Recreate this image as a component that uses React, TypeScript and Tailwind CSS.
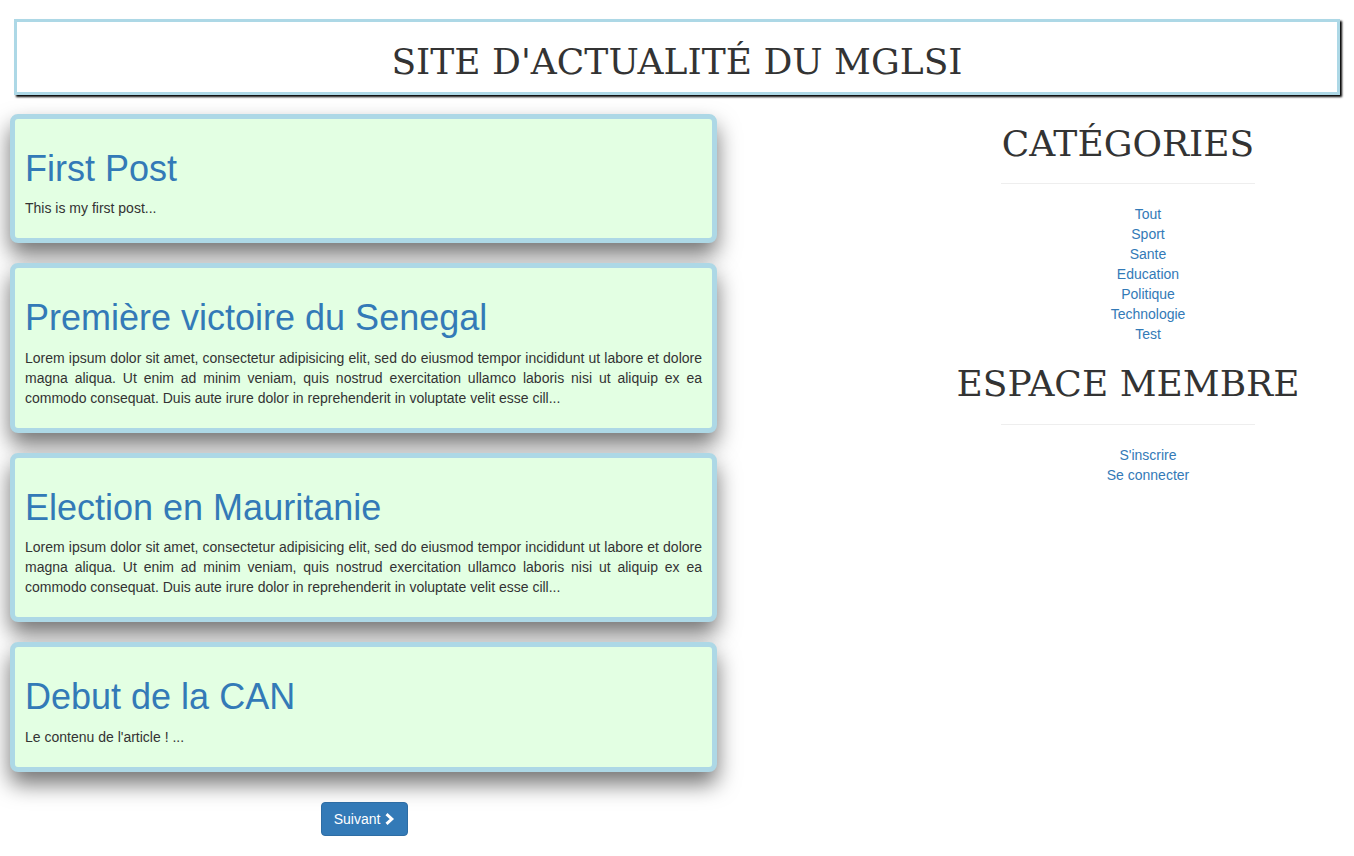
const posts = [
  { title: "First Post", body: "This is my first post..." },
  {
    title: "Première victoire du Senegal",
    body: "Lorem ipsum dolor sit amet, consectetur adipisicing elit, sed do eiusmod tempor incididunt ut labore et dolore magna aliqua. Ut enim ad minim veniam, quis nostrud exercitation ullamco laboris nisi ut aliquip ex ea commodo consequat. Duis aute irure dolor in reprehenderit in voluptate velit esse cill...",
  },
  {
    title: "Election en Mauritanie",
    body: "Lorem ipsum dolor sit amet, consectetur adipisicing elit, sed do eiusmod tempor incididunt ut labore et dolore magna aliqua. Ut enim ad minim veniam, quis nostrud exercitation ullamco laboris nisi ut aliquip ex ea commodo consequat. Duis aute irure dolor in reprehenderit in voluptate velit esse cill...",
  },
  { title: "Debut de la CAN", body: "Le contenu de l'article ! ..." },
];

const categories = ["Tout", "Sport", "Sante", "Education", "Politique", "Technologie", "Test"];
const membre = ["S'inscrire", "Se connecter"];

const serif = "font-['DejaVu_Serif',serif]";

const SideBlock = ({ title, links }: { title: string; links: string[] }) => (
  <div>
    {/* heading + short rule */}
    <h1 className={`${serif} mt-5 mb-0 text-[36px] leading-[39.6px] text-[#333] text-center font-normal`}>
      {title}
    </h1>
    <hr className="mx-auto mt-[20px] w-[60%] border-0 border-t border-[#eee]" />
    <ul className="mt-5 pl-10 text-center">
      {links.map((l) => (
        <li key={l} className="leading-5">
          <a href="#" className="text-[#337ab7]">
            {l}
          </a>
        </li>
      ))}
    </ul>
  </div>
);

const App = () => {
  return (
    <div className="min-h-[856px] bg-white font-['Liberation_Sans',Arial,sans-serif] text-[14px] leading-5 text-[#333]">
      {/* Header */}
      <div className="pt-[19px] px-[14px]">
        <div className="border-[3px] border-[#add8e6] bg-white shadow-[2px_2px_2px_#000]">
          <h1 className={`${serif} mt-5 mb-[10px] text-[36px] leading-[39.6px] text-center font-normal text-[#333]`}>
            SITE D'ACTUALITÉ DU MGLSI
          </h1>
        </div>
      </div>

      <div className="flex pt-[9px]">
        {/* Posts */}
        <div className="w-[727px] shrink-0">
          <div className="flex flex-col gap-5 px-[10px] pt-[10px]">
            {posts.map((p) => (
              <div
                key={p.title}
                className="rounded-[8px] border-[5px] border-[#add8e6] bg-[#e3ffe3] px-[10px] py-[10px] shadow-[0_12px_22px_rgba(0,0,0,0.55)]"
              >
                <h1 className="mt-5 mb-[10px] text-[36px] leading-[39.6px] text-[#337ab7]">
                  <a href="#">{p.title}</a>
                </h1>
                <p className="mb-[10px] text-justify">{p.body}</p>
              </div>
            ))}
          </div>
          <div className="mt-[30px] flex justify-center pl-[2px]">
            <button className="flex h-[34px] items-center gap-[4px] rounded-[4px] border border-[#2e6da4] bg-[#337ab7] px-3 text-white">
              Suivant
              <svg width="11" height="12" viewBox="0 0 11 12" aria-hidden>
                <path d="M2.5 1.2 L7.8 6 L2.5 10.8" fill="none" stroke="white" strokeWidth="3" />
              </svg>
            </button>
          </div>
        </div>

        {/* Sidebar */}
        <div className="ml-auto w-[452px] px-[15px]">
          <SideBlock title="CATÉGORIES" links={categories} />
          <SideBlock title="ESPACE MEMBRE" links={membre} />
        </div>
      </div>
    </div>
  );
};

export default App;
